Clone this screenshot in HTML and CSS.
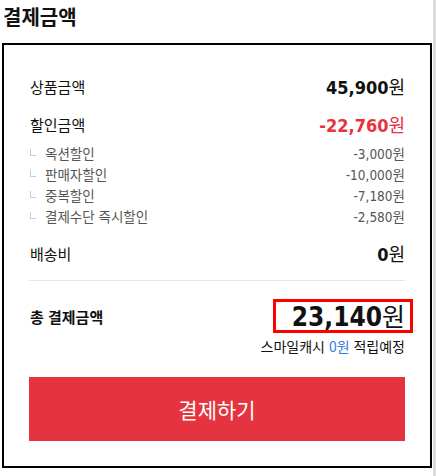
FILE: index.html
```html
<!DOCTYPE html>
<html lang="ko">

<head>
  <meta charset="UTF-8" />
  <meta name="viewport" content="width=device-width, initial-scale=1.0" />
  <title>결제금액</title>
  <link rel="stylesheet" href="styles.css">
</head>

<body>
  <div class="page">
    <h2 class="title">결제금액</h2>

    <section class="pay-box">
      <div class="row">
        <span class="label">상품금액</span>
        <span class="price">45,900<em>원</em></span>
      </div>

      <div class="row row-discount">
        <span class="label">할인금액</span>
        <span class="price red">-22,760<em>원</em></span>
      </div>
      <ul class="sub-list">
        <li><span class="sub-label">옥션할인</span><span class="sub-price">-3,000<em>원</em></span></li>
        <li><span class="sub-label">판매자할인</span><span class="sub-price">-10,000<em>원</em></span></li>
        <li><span class="sub-label">중복할인</span><span class="sub-price">-7,180<em>원</em></span></li>
        <li><span class="sub-label">결제수단 즉시할인</span><span class="sub-price">-2,580<em>원</em></span></li>
      </ul>

      <div class="row row-ship">
        <span class="label">배송비</span>
        <span class="price">0<em>원</em></span>
      </div>

      <div class="total">
        <span class="label bold">총 결제금액</span>
        <span class="total-price">23,140<em>원</em></span>
      </div>
      <p class="cash">스마일캐시 <span class="blue">0원</span> 적립예정</p>

      <button class="pay-btn" type="button">결제하기</button>
    </section>
  </div>
</body>

</html>
```

FILE: styles.css
```css
* {
  margin: 0;
  padding: 0;
  box-sizing: border-box;
}

body {
  font-family: 'Noto Sans CJK KR', sans-serif;
  background: #fff;
  color: #111;
}

.page {
  width: 436px;
  min-height: 476px;
  padding-left: 2px;
  border-right: 3px solid #dcdcdc;
}

em {
  font-style: normal;
  font-family: 'Noto Sans CJK KR', sans-serif;
}

.title {
  font-size: 20px;
  font-weight: 700;
  line-height: 34px;
  padding-left: 1px;
  margin-bottom: 9px;
}

.pay-box {
  width: 430px;
  border: 2px solid #000;
  padding: 28px 25px 25px;
}

.row {
  display: flex;
  justify-content: space-between;
  align-items: center;
  height: 26px;
}

.row-discount {
  margin-top: 12px;
}

.label {
  font-size: 15px;
  padding-left: 1px;
}

.label.bold {
  font-weight: 700;
}

.price {
  font-family: 'DejaVu Sans Condensed', 'Noto Sans CJK KR', sans-serif;
  font-size: 18px;
  font-weight: 700;
}

.price em {
  font-size: 18px;
  font-weight: 400;
}

.red {
  color: #e8323e;
}

.sub-list {
  list-style: none;
  margin-top: 5px;
}

.sub-list li {
  display: flex;
  justify-content: space-between;
  align-items: center;
  height: 21px;
  color: #555;
}

.sub-label {
  font-size: 13.5px;
  display: flex;
  align-items: center;
}

.sub-label::before {
  content: '';
  width: 5px;
  height: 6px;
  border-left: 1px solid #ccc;
  border-bottom: 1px solid #ccc;
  margin: 0 9px 0 1px;
}

.sub-price {
  font-family: 'DejaVu Sans Condensed', 'Noto Sans CJK KR', sans-serif;
  font-size: 13.5px;
}

.row-ship {
  margin-top: 14px;
  padding-bottom: 14px;
  height: auto;
  border-bottom: 1px solid #e6e6e6;
}

.total {
  display: flex;
  justify-content: space-between;
  align-items: center;
  margin-top: 18px;
  margin-right: -8px;
}

.total-price {
  font-family: 'DejaVu Sans Condensed', 'Noto Sans CJK KR', sans-serif;
  font-size: 26px;
  font-weight: 700;
  line-height: 26px;
  border: 3px solid #f00;
  padding: 0 5px 0 16px;
}

.total-price em {
  font-size: 25px;
  font-weight: 400;
}

.cash {
  margin-top: 4px;
  font-size: 14px;
  line-height: 18px;
  text-align: right;
}

.blue {
  color: #2f80e0;
}

.pay-btn {
  display: block;
  width: 100%;
  height: 64px;
  margin-top: 22px;
  border: none;
  background: #e5343f;
  color: #fff;
  font-family: 'Noto Sans CJK KR', sans-serif;
  font-size: 21px;
  cursor: pointer;
}
```
